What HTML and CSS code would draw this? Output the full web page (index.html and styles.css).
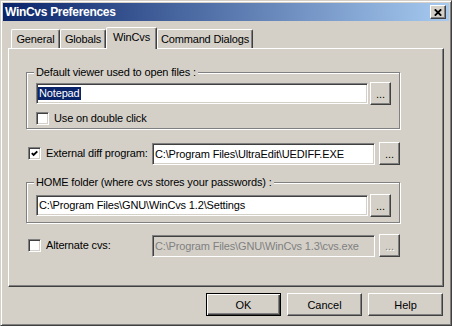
FILE: index.html
```html
<!DOCTYPE html>
<html lang="en">
<head>
    <meta charset="UTF-8">
    <title>WinCvs Preferences</title>
    <link rel="stylesheet" href="styles.css">
</head>
<body>
    <div class="window">
        <div class="titlebar">
            <span class="title">WinCvs Preferences</span>
            <span class="close-btn">
                <svg width="8" height="7" viewBox="0 0 8 7">
                    <path d="M0.8 0.3 L7.2 6.7 M7.2 0.3 L0.8 6.7" stroke="#000" stroke-width="1.8" fill="none"/>
                </svg>
            </span>
        </div>

        <div class="client">
            <div class="tabs">
                <div class="tab tab-general">General</div>
                <div class="tab tab-globals">Globals</div>
                <div class="tab tab-active tab-wincvs">WinCvs</div>
                <div class="tab tab-commands">Command Dialogs</div>
            </div>

            <div class="panel">
                <fieldset class="group group-viewer">
                    <legend>Default viewer used to open files :</legend>
                    <div class="field-row">
                        <div class="edit"><span class="selected">Notepad</span></div>
                        <button class="browse">...</button>
                    </div>
                    <label class="check check-dblclick"><span class="box"></span>Use on double click</label>
                </fieldset>

                <div class="option-row option-diff">
                    <label class="check option-label">
                        <span class="box">
                            <svg width="7" height="7" viewBox="0 0 7 7">
                                <path d="M0.8 3.2 L2.6 5 L6.3 1.3" stroke="#000" stroke-width="1.9" fill="none"/>
                            </svg>
                        </span>External diff program:
                    </label>
                    <div class="edit edit-wide">C:\Program Files\UltraEdit\UEDIFF.EXE</div>
                    <button class="browse">...</button>
                </div>

                <fieldset class="group group-home">
                    <legend>HOME folder (where cvs stores your passwords) :</legend>
                    <div class="field-row">
                        <div class="edit">C:\Program Files\GNU\WinCvs 1.2\Settings</div>
                        <button class="browse">...</button>
                    </div>
                </fieldset>

                <div class="option-row option-alt">
                    <label class="check option-label"><span class="box"></span>Alternate cvs:</label>
                    <div class="edit edit-wide edit-disabled">C:\Program Files\GNU\WinCvs 1.3\cvs.exe</div>
                    <button class="browse browse-disabled" disabled>...</button>
                </div>
            </div>

            <div class="buttons">
                <button class="btn btn-default">OK</button>
                <button class="btn">Cancel</button>
                <button class="btn">Help</button>
            </div>
        </div>
    </div>
</body>
</html>
```

FILE: styles.css
```css
body {
    margin: 0;
    font-family: "Liberation Sans", Arial, sans-serif;
    font-size: 11px;
    letter-spacing: -0.15px;
    color: #000;
}
.window {
    width: 452px;
    height: 326px;
    box-sizing: border-box;
    background: #d4d0c8;
    border: 1px solid;
    border-color: #d4d0c8 #404040 #404040 #d4d0c8;
    box-shadow: inset 1px 1px #fff, inset -1px -1px #808080;
    padding: 2px;
}
.titlebar {
    height: 18px;
    display: flex;
    align-items: center;
    justify-content: space-between;
    padding: 0 3px 0 2px;
    background: linear-gradient(to right, #0a246a, #a6caf0);
    color: white;
    font-size: 12px;
    font-weight: bold;
    letter-spacing: -0.3px;
}
.close-btn {
    width: 16px;
    height: 14px;
    box-sizing: border-box;
    display: flex;
    align-items: center;
    justify-content: center;
    background: #d4d0c8;
    border: 1px solid;
    border-color: #fff #404040 #404040 #fff;
    box-shadow: inset -1px -1px #808080;
}
.client {
    padding: 6px 5px 0;
}

/* tabs */
.tabs {
    display: flex;
    align-items: flex-end;
    height: 21px;
    padding-left: 3px;
}
.tab {
    box-sizing: border-box;
    height: 19px;
    padding-top: 3px;
    line-height: 13px;
    text-align: center;
    border: 1px solid;
    border-bottom: none;
    border-color: #fff #404040 #404040 #fff;
    box-shadow: inset -1px 0 #808080;
    border-radius: 2px 2px 0 0;
}
.tab-active {
    height: 22px;
    margin-bottom: -1px;
    padding-top: 3px;
    position: relative;
    background: #d4d0c8;
}
.tab-general { width: 49px; }
.tab-globals { width: 46px; }
.tab-wincvs { width: 51px; }
.tab-commands { width: 96px; }

.panel {
    box-sizing: border-box;
    height: 239px;
    border: 1px solid;
    border-color: #fff #404040 #404040 #fff;
    box-shadow: inset -1px -1px #808080;
    padding: 17px 0 0 17px;
}

/* group boxes */
.group {
    box-sizing: border-box;
    width: 374px;
    margin: 0;
    padding: 0 8px 3px 9px;
    border: 1px solid #808080;
    box-shadow: inset 1px 1px #fff, 1px 1px #fff;
}
.group legend {
    padding: 0 2px;
    margin-left: -2px;
    line-height: 13px;
    background: #d4d0c8;
}
.group-home {
    margin-top: 11px;
    padding-bottom: 5px;
}
.group-home .field-row { margin-top: 5px; }

.field-row {
    display: flex;
    align-items: center;
    gap: 2px;
    height: 23px;
    margin-top: 3px;
}
.edit {
    flex: 1;
    height: 21px;
    box-sizing: border-box;
    background: white;
    border: 1px solid;
    border-color: #808080 #fff #fff #808080;
    box-shadow: inset 1px 1px #404040, inset -1px -1px #d4d0c8;
    padding: 0 2px;
    line-height: 19px;
    white-space: nowrap;
    overflow: hidden;
}
.selected {
    display: inline-block;
    line-height: 13px;
    margin-left: -1px;
    padding: 0 1px;
    background: #0a246a;
    color: white;
}
.edit-wide {
    flex: none;
    width: 223px;
    height: 22px;
    line-height: 20px;
}
.edit-disabled {
    background: #d4d0c8;
    color: #808080;
}
.browse {
    flex: none;
    width: 21px;
    height: 23px;
    box-sizing: border-box;
    padding: 0;
    font: inherit;
    line-height: 18px;
    color: #000;
    background: #d4d0c8;
    border: 1px solid;
    border-color: #fff #404040 #404040 #fff;
    box-shadow: inset -1px -1px #808080;
}
.browse-disabled {
    color: #808080;
    text-shadow: 1px 1px #fff;
}

/* check boxes */
.check {
    display: flex;
    align-items: center;
    gap: 5px;
    line-height: 13px;
}
.check-dblclick { margin-top: 7px; }
.box {
    flex: none;
    width: 13px;
    height: 13px;
    box-sizing: border-box;
    display: flex;
    align-items: center;
    justify-content: center;
    background: white;
    border: 1px solid;
    border-color: #808080 #fff #fff #808080;
    box-shadow: inset 1px 1px #404040, inset -1px -1px #d4d0c8;
}

.option-row {
    display: flex;
    align-items: center;
    height: 23px;
    width: 374px;
}
.option-diff { margin-top: 13px; }
.option-alt { margin-top: 11px; }
.option-label {
    box-sizing: border-box;
    width: 126px;
    padding-left: 2px;
}
.option-row .browse { margin-left: 4px; }

/* dialog buttons */
.buttons {
    display: flex;
    justify-content: flex-end;
    gap: 6px;
    margin-top: 6px;
    padding-right: 1px;
}
.btn {
    width: 75px;
    height: 23px;
    box-sizing: border-box;
    padding: 0;
    font: inherit;
    color: #000;
    background: #d4d0c8;
    border: 1px solid;
    border-color: #fff #404040 #404040 #fff;
    box-shadow: inset -1px -1px #808080;
}
.btn-default {
    border-color: #000;
    box-shadow: inset 1px 1px #fff, inset -1px -1px #404040, inset -2px -2px #808080;
}
```
